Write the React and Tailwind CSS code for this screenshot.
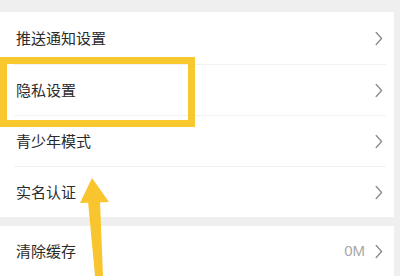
import React from "react";

const Chevron = () => (
  <svg width="8" height="15" viewBox="0 0 8 15" className="shrink-0">
    <path d="M1.2 1.5 L6.6 7.5 L1.2 13.5" fill="none" stroke="#8a8a8a" strokeWidth="1.3" strokeLinecap="round" strokeLinejoin="round" />
  </svg>
);

const Row = ({ label, value, h, sep = true }) => (
  <div className={`relative flex items-center justify-between pl-4 pr-[11px] ${h}`}>
    <span className="text-[15px] text-[#2b2b2b]">{label}</span>
    <div className="flex items-center gap-[10px]">
      {value && <span className="text-[15px] text-[#a8a8a8]" style={{ fontFamily: '"Liberation Sans", sans-serif' }}>{value}</span>}
      <Chevron />
    </div>
    {sep && <div className="absolute bottom-0 left-[14px] right-[8px] h-px bg-[#f2f2f2]" />}
  </div>
);

export default function App() {
  return (
    <div
      className="relative w-[400px] h-[276px] overflow-hidden bg-white flex flex-col"
      style={{ fontFamily: '"Noto Sans CJK SC", "Noto Sans", sans-serif' }}
    >
      <div className="h-[12px] bg-[#efefef] shrink-0" />
      <div className="flex flex-1">
        <div className="w-[394px] flex flex-col">
          <Row label="推送通知设置" h="h-[53px]" />
          <Row label="隐私设置" h="h-[51px]" />
          <Row label="青少年模式" h="h-[51px]" />
          <Row label="实名认证" h="h-[50px]" sep={false} />
          <div className="h-[9px] bg-[#efefef]" />
          <Row label="清除缓存" value="0M" h="h-[50px]" sep={false} />
        </div>
        <div className="w-[6px] bg-[#efefef]" />
      </div>

      <div className="absolute left-0 top-[57px] w-[195px] h-[70px] border-[7px] border-[#f8c92f]" />

      <svg className="absolute left-0 top-0" width="400" height="276" viewBox="0 0 400 276">
        <polygon points="92,178 80,203 109,202" fill="#f8c52f" />
        <polygon points="88,201 100,201 103,276 95,276" fill="#f8c52f" />
      </svg>
    </div>
  );
}
